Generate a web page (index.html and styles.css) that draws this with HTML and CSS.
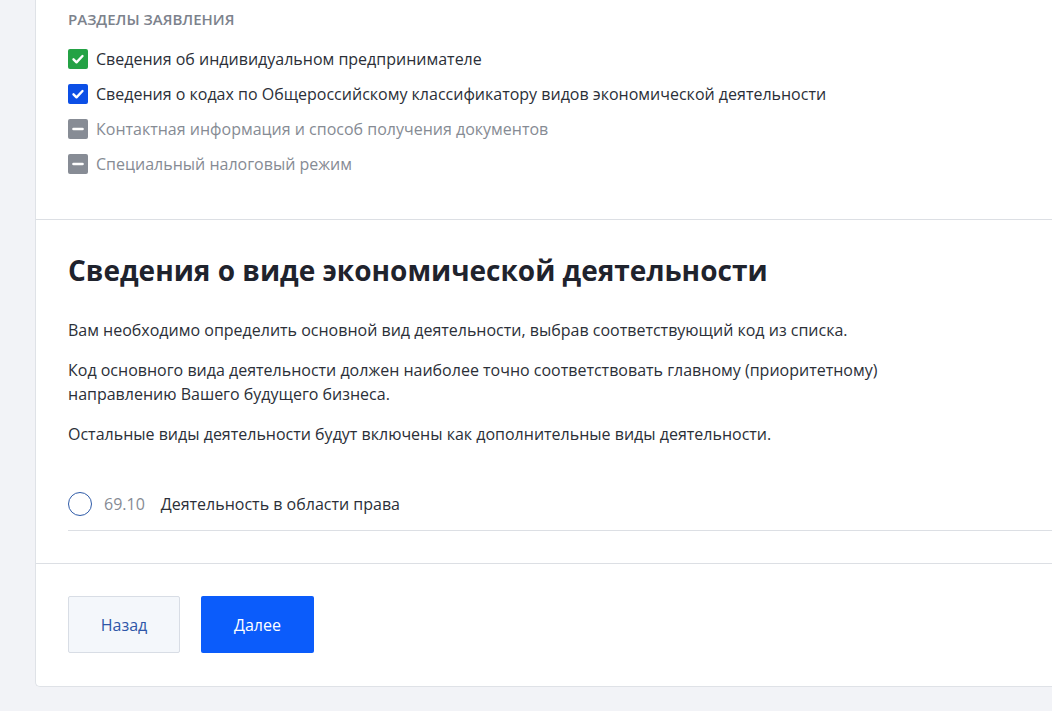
FILE: index.html
```html
<!DOCTYPE html>
<html lang="ru">
<head>
<meta charset="utf-8">
<title>Сведения о виде экономической деятельности</title>
<link rel="stylesheet" href="styles.css">
</head>
<body>
<div class="page">
  <div class="card">
    <section class="sections">
      <div class="sections-title">Разделы заявления</div>
      <ul class="steps">
        <li class="step done">
          <span class="box box-green"><svg viewBox="0 0 20 20" width="20" height="20"><path d="M5.5 10.3l3 3 6-6.3" fill="none" stroke="#fff" stroke-width="2.4" stroke-linecap="round" stroke-linejoin="round"/></svg></span>
          <span class="step-text">Сведения об индивидуальном предпринимателе</span>
        </li>
        <li class="step done">
          <span class="box box-blue"><svg viewBox="0 0 20 20" width="20" height="20"><path d="M5.5 10.3l3 3 6-6.3" fill="none" stroke="#fff" stroke-width="2.4" stroke-linecap="round" stroke-linejoin="round"/></svg></span>
          <span class="step-text">Сведения о кодах по Общероссийскому классификатору видов экономической деятельности</span>
        </li>
        <li class="step todo">
          <span class="box box-grey"><svg viewBox="0 0 20 20" width="20" height="20"><path d="M5.5 10h9" fill="none" stroke="#fff" stroke-width="2.6" stroke-linecap="round"/></svg></span>
          <span class="step-text">Контактная информация и способ получения документов</span>
        </li>
        <li class="step todo">
          <span class="box box-grey"><svg viewBox="0 0 20 20" width="20" height="20"><path d="M5.5 10h9" fill="none" stroke="#fff" stroke-width="2.6" stroke-linecap="round"/></svg></span>
          <span class="step-text">Специальный налоговый режим</span>
        </li>
      </ul>
    </section>

    <section class="main">
      <h1 class="title">Сведения о виде экономической деятельности</h1>
      <p class="text">Вам необходимо определить основной вид деятельности, выбрав соответствующий код из списка.</p>
      <p class="text">Код основного вида деятельности должен наиболее точно соответствовать главному (приоритетному)<br>направлению Вашего будущего бизнеса.</p>
      <p class="text">Остальные виды деятельности будут включены как дополнительные виды деятельности.</p>
      <label class="option">
        <span class="radio"></span>
        <span class="code">69.10</span>
        <span class="option-text">Деятельность в области права</span>
      </label>
    </section>

    <section class="footer">
      <button class="btn btn-back" type="button">Назад</button>
      <button class="btn btn-next" type="button">Далее</button>
    </section>
  </div>
</div>
</body>
</html>
```

FILE: styles.css
```css
html, body {
  margin: 0;
  padding: 0;
}
body {
  background: #f2f3f7;
  font-family: "Open Sans", "Noto Sans", sans-serif;
  color: #2b2f38;
  width: 1052px;
  height: 711px;
  overflow: hidden;
}
.page {
  padding-left: 35px;
}
.card {
  background: #fff;
  border-left: 1px solid #dfe2e7;
  border-bottom: 1px solid #dfe2e7;
  border-bottom-left-radius: 5px;
}
.sections {
  padding: 9px 32px 43px;
  border-bottom: 1px solid #dcdfe4;
}
.sections-title {
  font-size: 15px;
  line-height: 20px;
  font-weight: 600;
  text-transform: uppercase;
  color: #7c828c;
}
.steps {
  list-style: none;
  margin: 18px 0 0;
  padding: 0;
  display: flex;
  flex-direction: column;
  gap: 11px;
}
.step {
  display: flex;
  align-items: center;
  gap: 8px;
  font-size: 16px;
  line-height: 24px;
}
.step.done .step-text {
  color: #2b2f38;
}
.step.todo .step-text {
  color: #868b94;
}
.box {
  width: 20px;
  height: 20px;
  border-radius: 2px;
  display: flex;
  flex: none;
}
.box-green { background: #24a245; }
.box-blue { background: #0c4fe6; }
.box-grey { background: #878c95; }

.main {
  padding: 32px 0 32px 32px;
  border-bottom: 1px solid #dcdfe4;
}
.title {
  margin: 0 0 30px;
  font-size: 28px;
  line-height: 36px;
  font-weight: 700;
  color: #1f232d;
}
.text {
  margin: 0 0 16px;
  font-size: 16px;
  line-height: 24px;
  color: #2b2f38;
}
.option {
  margin-top: 32px;
  display: flex;
  align-items: center;
  padding: 14px 0;
  border-bottom: 1px solid #dcdfe4;
  font-size: 16px;
  line-height: 24px;
}
.radio {
  width: 24px;
  height: 24px;
  box-sizing: border-box;
  border: 1.5px solid #2f5ba8;
  border-radius: 50%;
  flex: none;
  margin-right: 12px;
}
.code {
  color: #868b94;
  margin-right: 16px;
}
.option-text {
  color: #2b2f38;
}

.footer {
  padding: 32px 32px 33px;
  display: flex;
  gap: 21px;
}
.btn {
  font-family: "Open Sans", "Noto Sans", sans-serif;
  font-size: 16px;
  height: 57px;
  border-radius: 2px;
  cursor: pointer;
}
.btn-back {
  width: 112px;
  background: #f4f7fb;
  border: 1px solid #d8dde5;
  color: #2e56a8;
}
.btn-next {
  width: 113px;
  background: #0b5cfb;
  border: none;
  color: #fff;
}
```
